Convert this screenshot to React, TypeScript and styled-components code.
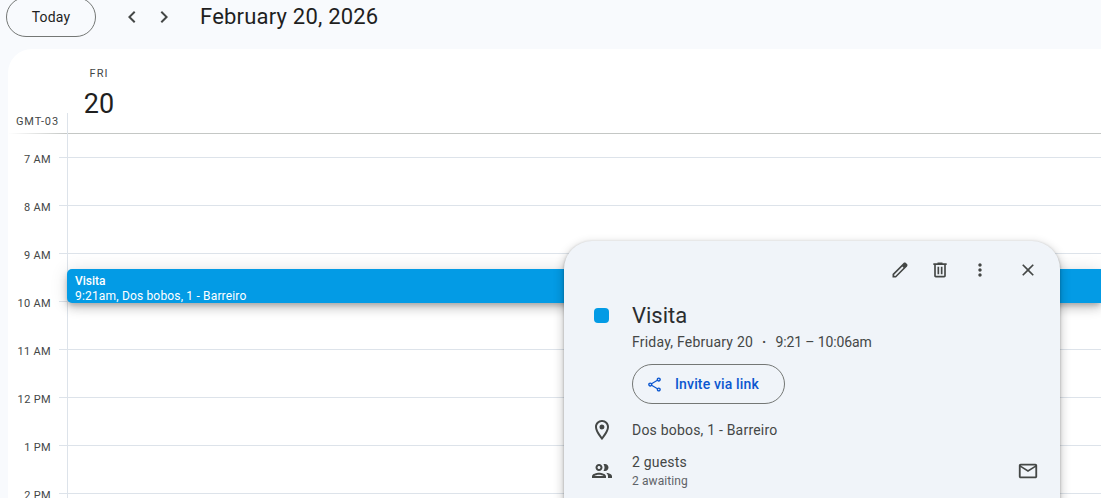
import React from "react";
import styled, { createGlobalStyle } from "styled-components";

const FONT = `Roboto, "Noto Sans", Arial, sans-serif`;

const GlobalStyle = createGlobalStyle`
  html, body {
    margin: 0;
    padding: 0;
    height: 498px;
    overflow: hidden;
    background: #f8fafd;
  }
  body {
    font-family: ${FONT};
    color: #1f1f1f;
  }
`;

const HOURS = ["7 AM", "8 AM", "9 AM", "10 AM", "11 AM", "12 PM", "1 PM", "2 PM"];

const PATHS = {
  back: "M15.41 7.41L14 6l-6 6 6 6 1.41-1.41L10.83 12z",
  forward: "M10 6L8.59 7.41 13.17 12l-4.58 4.59L10 18l6-6z",
  edit: "M20.41 4.94l-1.35-1.35c-.78-.78-2.05-.78-2.83 0L3 16.82V21h4.18L20.41 7.77c.79-.78.79-2.05 0-2.83zm-14 14.12L5 19v-1.36l9.82-9.82 1.41 1.41-9.82 9.83z",
  trash: "M15 4V3H9v1H4v2h1v13c0 1.1.9 2 2 2h10c1.1 0 2-.9 2-2V6h1V4h-5zm2 15H7V6h10v13zM9 8h2v9H9zm4 0h2v9h-2z",
  more: "M12 8c1.1 0 2-.9 2-2s-.9-2-2-2-2 .9-2 2 .9 2 2 2zm0 2c-1.1 0-2 .9-2 2s.9 2 2 2 2-.9 2-2-.9-2-2-2zm0 6c-1.1 0-2 .9-2 2s.9 2 2 2 2-.9 2-2-.9-2-2-2z",
  close: "M19 6.41L17.59 5 12 10.59 6.41 5 5 6.41 10.59 12 5 17.59 6.41 19 12 13.41 17.59 19 19 17.59 13.41 12z",
  place: "M12 2C8.13 2 5 5.13 5 9c0 5.25 7 13 7 13s7-7.75 7-13c0-3.87-3.13-7-7-7zM7 9c0-2.76 2.24-5 5-5s5 2.24 5 5c0 2.88-2.88 7.19-5 9.88C9.92 16.21 7 11.85 7 9zM12 6.5a2.5 2.5 0 1 0 0 5 2.5 2.5 0 0 0 0-5z",
  people: "M9 13.75c-2.34 0-7 1.17-7 3.5V19h14v-1.75c0-2.33-4.66-3.5-7-3.5zM4.34 17c.84-.58 2.87-1.25 4.66-1.25s3.82.67 4.66 1.25H4.34zM9 12c1.93 0 3.5-1.57 3.5-3.5S10.93 5 9 5 5.5 6.57 5.5 8.5 7.07 12 9 12zm0-5c.83 0 1.5.67 1.5 1.5S9.83 10 9 10s-1.5-.67-1.5-1.5S8.17 7 9 7zm7.04 6.81c1.16.84 1.96 1.96 1.96 3.44V19h4v-1.75c0-2.02-3.5-3.17-5.96-3.44zM15 12c1.93 0 3.5-1.57 3.5-3.5S16.93 5 15 5c-.54 0-1.04.13-1.5.35.63.89 1 1.98 1 3.15s-.37 2.26-1 3.15c.46.22.96.35 1.5.35z",
  mail: "M20 4H4c-1.1 0-1.99.9-1.99 2L2 18c0 1.1.9 2 2 2h16c1.1 0 2-.9 2-2V6c0-1.1-.9-2-2-2zm0 14H4V8l8 5 8-5v10zm-8-7L4 6h16l-8 5z",
  share: "M18 16.08c-.76 0-1.44.3-1.96.77L8.91 12.7c.05-.23.09-.46.09-.7s-.04-.47-.09-.7l7.05-4.11c.54.5 1.25.81 2.04.81 1.66 0 3-1.34 3-3s-1.34-3-3-3-3 1.34-3 3c0 .24.04.47.09.7L8.04 9.81C7.5 9.31 6.79 9 6 9c-1.66 0-3 1.34-3 3s1.34 3 3 3c.79 0 1.5-.31 2.04-.81l7.12 4.16c-.05.21-.08.43-.08.65 0 1.61 1.31 2.92 2.92 2.92 1.61 0 2.92-1.31 2.92-2.92s-1.31-2.92-2.92-2.92zM18 4c.55 0 1 .45 1 1s-.45 1-1 1-1-.45-1-1 .45-1 1-1zM6 13c-.55 0-1-.45-1-1s.45-1 1-1 1 .45 1 1-.45 1-1 1zm12 7.02c-.55 0-1-.45-1-1s.45-1 1-1 1 .45 1 1-.45 1-1 1z",
};

const Icon = ({ name, size = 24 }: { name: keyof typeof PATHS; size?: number }) => (
  <svg width={size} height={size} viewBox="0 0 24 24" fill="currentColor" fillRule="evenodd" aria-hidden="true">
    <path d={PATHS[name]} />
  </svg>
);

export default function App() {
  return (
    <Page>
      <GlobalStyle />
      <Toolbar>
        <TodayButton>Today</TodayButton>
        <NavGroup>
          <NavButton aria-label="Previous day">
            <Icon name="back" />
          </NavButton>
          <NavButton aria-label="Next day">
            <Icon name="forward" />
          </NavButton>
        </NavGroup>
        <DateTitle>February 20, 2026</DateTitle>
      </Toolbar>

      <Panel>
        <Header>
          <ZoneCell>GMT-03</ZoneCell>
          <DayCell>
            <DayName>FRI</DayName>
            <DayNumber>20</DayNumber>
          </DayCell>
        </Header>

        <LeadRow />
        {HOURS.map((hour) => (
          <HourRow key={hour}>
            <HourLabel>{hour}</HourLabel>
            <Tick />
            <Lane />
          </HourRow>
        ))}

        <EventBar>
          <EventTitle>Visita</EventTitle>
          <EventMeta>9:21am, Dos bobos, 1 - Barreiro</EventMeta>
        </EventBar>
      </Panel>

      <Popup>
        <PopupActions>
          <ActionButton aria-label="Edit">
            <Icon name="edit" size={20} />
          </ActionButton>
          <ActionButton aria-label="Delete">
            <Icon name="trash" size={20} />
          </ActionButton>
          <ActionButton aria-label="Options">
            <Icon name="more" size={20} />
          </ActionButton>
          <CloseButton aria-label="Close">
            <Icon name="close" size={20} />
          </CloseButton>
        </PopupActions>

        <TitleRow>
          <ColorSquare />
          <div>
            <EventName>Visita</EventName>
            <EventDate>
              Friday, February 20
              <Dot>·</Dot>
              <TimeRange>9:21 – 10:06am</TimeRange>
            </EventDate>
            <InviteButton>
              <Icon name="share" size={17} />
              Invite via link
            </InviteButton>
          </div>
        </TitleRow>

        <LocationRow>
          <RowIcon>
            <Icon name="place" />
          </RowIcon>
          <RowText>Dos bobos, 1 - Barreiro</RowText>
        </LocationRow>

        <GuestRow>
          <RowIcon>
            <Icon name="people" />
          </RowIcon>
          <div>
            <RowText>2 guests</RowText>
            <RowSubText>2 awaiting</RowSubText>
          </div>
          <MailIcon>
            <Icon name="mail" size={22} />
          </MailIcon>
        </GuestRow>
      </Popup>
    </Page>
  );
}

const Page = styled.div`
  position: relative;
  width: 1101px;
  height: 498px;
  overflow: hidden;
  background: #f8fafd;
`;

const Toolbar = styled.div`
  display: flex;
  align-items: center;
  height: 49px;
  padding: 0 0 15px 6px;
  box-sizing: border-box;
`;

const TodayButton = styled.button`
  flex: none;
  width: 90px;
  height: 40px;
  background: transparent;
  border: 1px solid #747775;
  border-radius: 20px;
  font-family: ${FONT};
  font-size: 14px;
  font-weight: 400;
  letter-spacing: 0.2px;
  color: #1f1f1f;
`;

const NavGroup = styled.div`
  display: flex;
  margin-left: 20px;
`;

const NavButton = styled.button`
  display: flex;
  align-items: center;
  justify-content: center;
  width: 32px;
  height: 32px;
  padding: 0;
  background: none;
  border: 0;
  color: #444746;
`;

const DateTitle = styled.div`
  margin-left: 20px;
  font-size: 22px;
  line-height: 28px;
  letter-spacing: 0.2px;
  color: #1f1f1f;
`;

const Panel = styled.div`
  position: relative;
  margin-left: 8px;
  height: 449px;
  overflow: hidden;
  background: #fff;
  border-top-left-radius: 24px;
`;

const Header = styled.div`
  display: flex;
  height: 85px;
`;

const ZoneCell = styled.div`
  align-self: flex-end;
  box-sizing: border-box;
  width: 60px;
  height: 21px;
  padding: 1px 8px 0 0;
  text-align: right;
  font-size: 11px;
  line-height: 16px;
  letter-spacing: 0.9px;
  color: #444746;
  border-right: 1px solid #dde3ea;
  background: linear-gradient(to right, rgba(196, 199, 197, 0), #c4c7c5) bottom / 100% 1px no-repeat;
`;

const DayCell = styled.div`
  flex: 1;
  display: flex;
  flex-direction: column;
  align-items: flex-start;
  padding-left: 15px;
  border-bottom: 1px solid #c4c7c5;
`;

const DayName = styled.div`
  width: 32px;
  margin-top: 18px;
  text-align: center;
  font-size: 11px;
  line-height: 14px;
  letter-spacing: 1px;
  color: #444746;
`;

const DayNumber = styled.div`
  width: 32px;
  margin-top: 7px;
  text-align: center;
  font-size: 27px;
  line-height: 32px;
  color: #1f1f1f;
`;

const LeadRow = styled.div`
  box-sizing: border-box;
  width: 60px;
  height: 23px;
  border-right: 1px solid #dde3ea;
`;

const HourRow = styled.div`
  display: flex;
  height: 48px;
`;

const HourLabel = styled.div`
  box-sizing: border-box;
  width: 51px;
  padding-right: 8px;
  margin-top: -5px;
  text-align: right;
  font-size: 11px;
  line-height: 16px;
  letter-spacing: 0.35px;
  color: #444746;
`;

const Tick = styled.div`
  box-sizing: border-box;
  width: 9px;
  border-top: 1px solid #dde3ea;
  border-right: 1px solid #dde3ea;
`;

const Lane = styled.div`
  flex: 1;
  border-top: 1px solid #dde3ea;
`;

const EventBar = styled.div`
  position: absolute;
  top: 220px;
  left: 59px;
  right: 0;
  height: 34px;
  box-sizing: border-box;
  padding: 5px 8px 0;
  background: #039be5;
  border-radius: 5px 0 0 5px;
  color: #fff;
  font-size: 12px;
  line-height: 14px;
  box-shadow: 0 6px 10px 0 rgba(0, 0, 0, 0.14), 0 1px 18px 0 rgba(0, 0, 0, 0.12),
    0 3px 5px -1px rgba(0, 0, 0, 0.2);
`;

const EventTitle = styled.div`
  font-weight: 500;
  line-height: 15px;
`;

const EventMeta = styled.div`
  line-height: 14px;
  letter-spacing: 0.17px;
`;

const Popup = styled.div`
  position: absolute;
  top: 241px;
  left: 564px;
  width: 496px;
  height: 300px;
  box-sizing: border-box;
  padding: 9px 22px 0 26px;
  background: #f0f4f9;
  border-radius: 28px;
  box-shadow: 0 4px 8px 3px rgba(0, 0, 0, 0.15), 0 1px 3px rgba(0, 0, 0, 0.3);
`;

const PopupActions = styled.div`
  display: flex;
  justify-content: flex-end;
  margin-right: -10px;
`;

const ActionButton = styled.button`
  display: flex;
  align-items: center;
  justify-content: center;
  width: 40px;
  height: 40px;
  padding: 0;
  background: none;
  border: 0;
  color: #444746;
`;

const CloseButton = styled(ActionButton)`
  margin-left: 8px;
`;

const TitleRow = styled.div`
  display: grid;
  grid-template-columns: 42px 1fr;
  margin-top: 12px;
`;

const ColorSquare = styled.div`
  width: 15px;
  height: 15px;
  margin: 6px 0 0 4px;
  background: #039be5;
  border-radius: 4px;
`;

const EventName = styled.div`
  font-size: 22px;
  line-height: 28px;
  color: #2b2d2f;
`;

const EventDate = styled.div`
  margin-top: 2px;
  font-size: 14px;
  line-height: 20px;
  letter-spacing: 0.22px;
  color: #444746;
`;

const Dot = styled.span`
  margin: 0 9px;
  font-weight: 700;
`;

const TimeRange = styled.span`
  letter-spacing: -0.13px;
`;

const InviteButton = styled.button`
  display: flex;
  align-items: center;
  gap: 12px;
  box-sizing: border-box;
  width: 153px;
  height: 40px;
  margin-top: 12px;
  padding: 0 0 0 13px;
  background: transparent;
  border: 1px solid #747775;
  border-radius: 20px;
  font-family: ${FONT};
  font-size: 14px;
  font-weight: 500;
  letter-spacing: 0.15px;
  color: #0b57d0;
`;

const LocationRow = styled.div`
  display: grid;
  grid-template-columns: 42px 1fr;
  align-items: center;
  margin-top: 14px;
  height: 24px;
`;

const GuestRow = styled.div`
  display: grid;
  grid-template-columns: 42px 1fr auto;
  align-items: center;
  margin-top: 10px;
`;

const RowIcon = styled.div`
  display: flex;
  color: #444746;
`;

const RowText = styled.div`
  font-size: 14px;
  line-height: 20px;
  letter-spacing: 0.2px;
  color: #444746;
`;

const RowSubText = styled.div`
  font-size: 12px;
  line-height: 16px;
  letter-spacing: 0.1px;
  margin-top: 1px;
  color: #5f6368;
`;

const MailIcon = styled.div`
  display: flex;
  margin-right: -1px;
  color: #444746;
`;
